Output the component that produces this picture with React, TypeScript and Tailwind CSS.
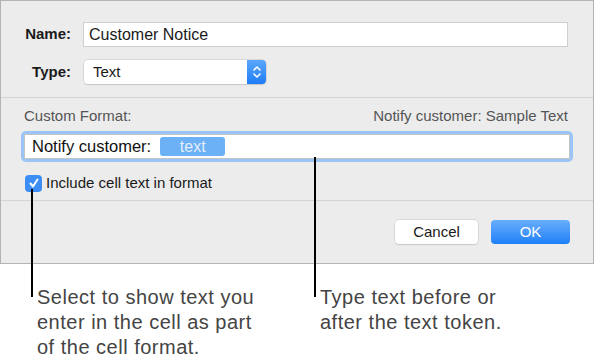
import React from 'react';

const font = { fontFamily: '"Liberation Sans", Arial, Helvetica, sans-serif' };

function Stepper() {
  return (
    <div className="w-[19px] h-full rounded-r-[4px] bg-gradient-to-b from-[#5aa6fb] to-[#1c7df5] flex items-center justify-center">
      <svg width="10" height="16" viewBox="0 0 10 16" fill="none" stroke="white" strokeWidth="1.6" strokeLinecap="round" strokeLinejoin="round">
        <path d="M2 6 L5 3 L8 6" />
        <path d="M2 10 L5 13 L8 10" />
      </svg>
    </div>
  );
}

function CheckBox() {
  return (
    <div className="w-[17px] h-[17px] rounded-[4px] bg-[#3c8ef6] flex items-center justify-center">
      <svg width="12" height="12" viewBox="0 0 12 12" fill="none" stroke="white" strokeWidth="2" strokeLinecap="round" strokeLinejoin="round">
        <path d="M2.5 6.5 L5 9.5 L9.5 2.5" />
      </svg>
    </div>
  );
}

export default function App() {
  return (
    <div className="relative w-[594px] h-[364px] bg-white overflow-hidden" style={font}>
      {/* DIALOG */}
      <div className="w-[594px] h-[264px] border border-[#b3b3b3] bg-[#ececec] flex flex-col">
        {/* NAME + TYPE */}
        <div className="h-[97px] border-b border-[#d4d4d4] pt-[21px] flex flex-col gap-[13px]">
          <div className="flex items-center">
            <div className="w-[70px] text-right text-[15px] font-bold text-[#1a1a1a]">Name:</div>
            <div className="ml-[12px] w-[485px] h-[25px] bg-white border border-[#cfcfcf] flex items-center px-[5px] text-[16px] text-[#1a1a1a]">
              Customer Notice
            </div>
          </div>
          <div className="flex items-center">
            <div className="w-[70px] text-right text-[15px] font-bold text-[#1a1a1a]">Type:</div>
            <div className="ml-[13px] w-[182px] h-[24px] bg-white rounded-[4px] shadow-[0_0_0_0.5px_#c4c4c4,0_1px_1px_rgba(0,0,0,0.15)] flex items-center">
              <div className="flex-1 pl-[9px] text-[15px] text-[#1a1a1a]">Text</div>
              <Stepper />
            </div>
          </div>
        </div>

        {/* CUSTOM FORMAT */}
        <div className="h-[103px] border-b border-[#d4d4d4] flex flex-col">
          <div className="mt-[9px] h-[19px] flex items-center justify-between pl-[23px] pr-[25px] text-[15px] text-[#555555]">
            <span>Custom Format:</span>
            <span>Notify customer: Sample Text</span>
          </div>
          <div className="mt-[5px] ml-[20px] w-[552px] h-[31px] rounded-[5px] bg-[#9ac5f6] p-[3px]">
            <div className="h-full bg-white border border-[#c4c4c4] flex items-center pl-[7px] text-[16.5px] text-[#111111]">
              <span>Notify customer:</span>
              <span className="ml-[9px] w-[65px] h-[19px] rounded-[3px] bg-[#6cb0f6] text-[#e3effd] text-[16px] flex items-center justify-center">text</span>
            </div>
          </div>
          <div className="mt-[10px] ml-[24px] flex items-center gap-[4px] text-[15px] text-[#1a1a1a]">
            <CheckBox />
            <span>Include cell text in format</span>
          </div>
        </div>

        {/* BUTTONS */}
        <div className="flex-1 flex justify-end items-start pt-[19px] pr-[23px] gap-[13px]">
          <button type="button" className="w-[83px] h-[24px] rounded-[4px] bg-white shadow-[0_0_0_0.5px_#c4c4c4,0_1px_1px_rgba(0,0,0,0.12)] text-[15px] text-[#1a1a1a]">
            Cancel
          </button>
          <button type="button" className="w-[79px] h-[24px] rounded-[4px] bg-gradient-to-b from-[#67aefc] to-[#1b7ff7] text-[15px] text-white">
            OK
          </button>
        </div>
      </div>

      {/* CALLOUT TEXT */}
      <div className="flex pt-[21px] text-[20px] leading-[25px] tracking-[0.5px] text-[#444444]">
        <div className="ml-[37px] w-[260px]">
          Select to show text you
          <br />
          enter in the cell as part
          <br />
          of the cell format.
        </div>
        <div className="ml-[23px]">
          Type text before or
          <br />
          after the text token.
        </div>
      </div>

      {/* CALLOUT LINES */}
      <div className="absolute left-[31px] top-[189px] w-[2px] h-[108px] bg-black" />
      <div className="absolute left-[314px] top-[157px] w-[2px] h-[140px] bg-black" />
    </div>
  );
}
